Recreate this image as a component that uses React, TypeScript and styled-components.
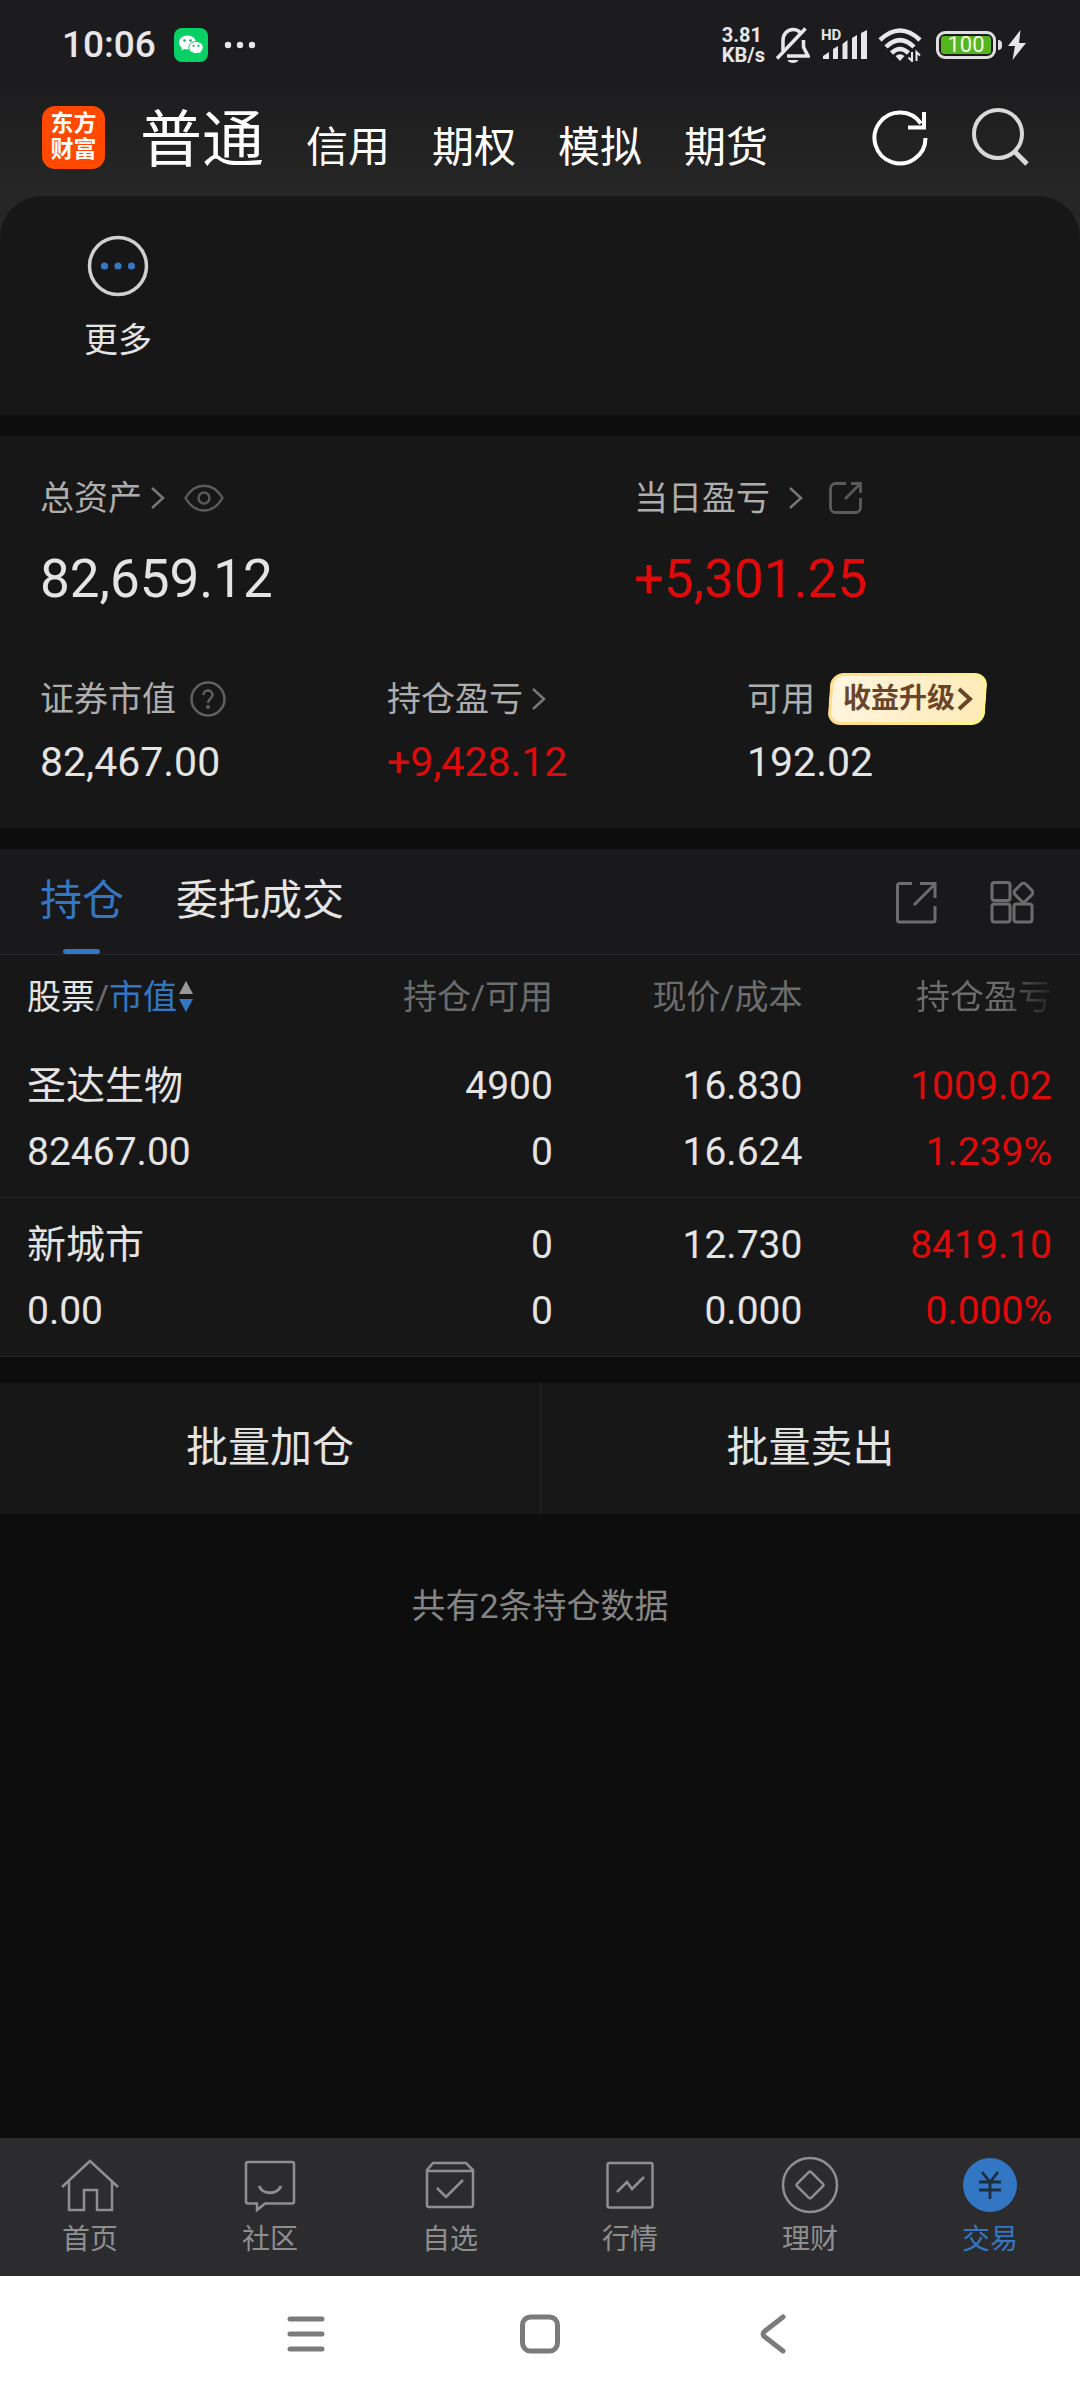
import React from "react";
import styled, { createGlobalStyle, css } from "styled-components";

const color = {
  page: "#0d0d0d",
  panel: "#171717",
  bar: "#19191b",
  line: "#262627",
  text: "#e4e4e4",
  label: "#adadad",
  muted: "#6c6c6c",
  blue: "#3377c4",
  red: "#e10a0a",
};

const GlobalStyle = createGlobalStyle`
  *, *::before, *::after { box-sizing: border-box; }
  body {
    margin: 0;
    background: ${color.page};
    color: ${color.text};
    font-family: Roboto, "Noto Sans CJK SC", sans-serif;
    line-height: 1.2;
  }
  button {
    margin: 0;
    padding: 0;
    border: 0;
    background: none;
    color: inherit;
    font: inherit;
    cursor: pointer;
  }
  a { color: inherit; text-decoration: none; }
  p, dl, dd { margin: 0; }
  svg { display: block; flex: none; }
`;

const Screen = styled.div`
  display: flex;
  flex-direction: column;
  min-height: 100vh;
`;

/* ---------- top area ---------- */

const Top = styled.header`
  background: linear-gradient(#1c1c1e 0, #1c1c1e 80px, #262626 190px);
`;

const StatusBar = styled.div`
  display: flex;
  align-items: center;
  height: 90px;
  padding: 0 54px 0 62px;
  color: #e8e6e8;
`;

const Clock = styled.time`
  margin-right: 18px;
  font-size: 37px;
  font-weight: 500;
  line-height: 40px;
`;

const StatusIcons = styled.div`
  display: flex;
  align-items: center;
  gap: 11px;
  margin-left: auto;
`;

const Speed = styled.span`
  display: flex;
  flex-direction: column;
  font-size: 20px;
  font-weight: 700;
  line-height: 20px;
`;

const SignalBox = styled.span`
  position: relative;
`;

const HdTag = styled.span`
  position: absolute;
  top: -2px;
  left: 0;
  font-size: 15px;
  font-weight: 700;
  line-height: 14px;
`;

const Power = styled.span`
  display: flex;
  align-items: center;
  gap: 6px;
  margin-left: 3px;
`;

const BatteryBox = styled.span`
  display: flex;
  align-items: center;
  gap: 2px;

  &::after {
    content: "";
    width: 4px;
    height: 10px;
    border-radius: 0 4px 4px 0;
    background: #e0dfe0;
  }
`;

const BatteryShell = styled.span`
  width: 60px;
  height: 28px;
  padding: 2px;
  border: 3px solid #e0dfe0;
  border-radius: 9px;
`;

const BatteryFill = styled.span`
  display: block;
  height: 18px;
  border-radius: 3px;
  background: #54b51c;
  color: #f4fbe9;
  font-size: 22px;
  line-height: 18px;
  text-align: center;
`;

const TitleBar = styled.div`
  display: flex;
  align-items: center;
  height: 106px;
  padding: 0 50px 12px 42px;
  color: #fff;
`;

const Logo = styled.a`
  display: flex;
  flex-direction: column;
  align-items: center;
  justify-content: center;
  width: 63px;
  height: 63px;
  margin-right: 35px;
  border-radius: 13px;
  background: #ff4800;
  font-size: 23px;
  font-weight: 700;
  line-height: 26px;
`;

const AccountTabs = styled.nav`
  display: flex;
  align-items: baseline;
  gap: 42px;
  padding-top: 14px;
`;

const AccountTab = styled.button<{ $current?: boolean }>`
  font-size: ${(p) => (p.$current ? 62 : 42)}px;
  line-height: 66px;
`;

const Tools = styled.div<{ $gap: number }>`
  display: flex;
  align-items: center;
  gap: ${(p) => p.$gap}px;
  margin-left: auto;
  color: ${color.muted};
`;

/* ---------- shortcuts ---------- */

const ShortcutBack = styled.div`
  background: #262626;
`;

const Shortcuts = styled.section`
  height: 219px;
  padding: 39px 84px 0;
  border-radius: 42px 42px 0 0;
  background: ${color.panel};
`;

const Shortcut = styled.button`
  display: flex;
  flex-direction: column;
  align-items: center;
  gap: 18px;
  font-size: 34px;
  line-height: 50px;
`;

/* ---------- assets ---------- */

const Assets = styled.section`
  display: grid;
  gap: 63px;
  margin: 21px 0;
  padding: 36px 0 41px 40px;
  background: ${color.panel};
`;

const Figures = styled.dl<{ $columns: string }>`
  display: grid;
  grid-template-columns: ${(p) => p.$columns};
`;

const Term = styled.dt<{ $gap?: number }>`
  display: flex;
  align-items: center;
  gap: ${(p) => p.$gap ?? 16}px;
  height: 52px;
  color: ${color.label};
  font-size: 34px;
`;

const TermLink = styled.a<{ $gap?: number }>`
  display: flex;
  align-items: center;
  gap: ${(p) => p.$gap ?? 8}px;
`;

const Amount = styled.dd<{ $large?: boolean; $gain?: boolean }>`
  color: ${(p) => (p.$gain ? color.red : color.text)};
  ${(p) =>
    p.$large
      ? css`
          margin-top: 24px;
          font-size: 53px;
          line-height: 62px;
        `
      : css`
          margin-top: 12px;
          font-size: 41px;
          line-height: 50px;
        `}
`;

const Upgrade = styled.button`
  position: relative;
  z-index: 0;
  display: flex;
  align-items: center;
  gap: 2px;
  height: 52px;
  padding: 0 13px 0 14px;
  color: #6b452a;
  font-size: 28px;
  font-weight: 700;

  &::before {
    content: "";
    position: absolute;
    inset: 0;
    z-index: -1;
    border: 3px solid transparent;
    border-radius: 13px;
    background:
      linear-gradient(100deg, #fff5e0, #ffebb8) padding-box,
      linear-gradient(100deg, #ffdb8c, #fff688) border-box;
    transform: skewX(-4deg);
  }
`;

/* ---------- holdings ---------- */

const Holdings = styled.section`
  background: ${color.panel};
`;

const TabBar = styled.div`
  display: flex;
  align-items: center;
  gap: 52px;
  height: 106px;
  padding: 0 46px 0 40px;
  border-bottom: 1px solid ${color.line};
  background: ${color.bar};
`;

const Tab = styled.button<{ $current?: boolean }>`
  position: relative;
  height: 105px;
  color: ${(p) => (p.$current ? color.blue : color.text)};
  font-size: 42px;

  ${(p) =>
    p.$current &&
    css`
      &::after {
        content: "";
        position: absolute;
        bottom: 0;
        left: 50%;
        width: 37px;
        height: 5px;
        margin-left: -19px;
        border-radius: 3px;
        background: ${color.blue};
      }
    `}
`;

const Table = styled.table`
  width: 100%;
  border-collapse: separate;
  border-spacing: 0;
  table-layout: fixed;
`;

const Head = styled.th<{ $width: string }>`
  width: ${(p) => p.$width};
  height: 84px;
  padding: 0;
  color: ${color.muted};
  font-size: 34px;
  font-weight: 400;
  text-align: right;
  white-space: nowrap;

  &:first-child {
    padding-left: 27px;
    text-align: left;
  }
  &:last-child { padding-right: 28px; }
`;

const SortHead = styled.div`
  display: flex;
  align-items: center;
`;

const StockTitle = styled.span`
  color: ${color.text};
`;

const SortButton = styled.button`
  display: flex;
  align-items: center;
  color: ${color.blue};
`;

const Fading = styled.span`
  mask-image: linear-gradient(to right, #000 62%, transparent 106%);
`;

const Cell = styled.td<{ $gain?: boolean }>`
  padding: 14px 0 12px;
  border-bottom: 1px solid ${color.line};
  color: ${(p) => (p.$gain ? color.red : color.text)};
  font-size: 39px;
  line-height: 66px;
  text-align: right;

  &:first-child {
    padding-left: 27px;
    text-align: left;
  }
  &:last-child { padding-right: 28px; }
`;

const Batch = styled.section`
  display: grid;
  grid-template-columns: 1fr 1fr;
  margin-top: 26px;
  background: ${color.panel};
`;

const BatchButton = styled.button`
  height: 131px;
  font-size: 42px;

  & + & { border-left: 1px solid ${color.line}; }
`;

const Count = styled.p`
  flex: 1;
  padding-top: 68px;
  color: #858585;
  font-size: 34px;
  line-height: 48px;
  text-align: center;
`;

/* ---------- bottom bars ---------- */

const MainNav = styled.nav`
  display: grid;
  grid-template-columns: repeat(6, 1fr);
  height: 138px;
  padding-top: 17px;
  background: #2c2c2e;
`;

const NavLink = styled.a<{ $current?: boolean }>`
  display: flex;
  flex-direction: column;
  align-items: center;
  gap: 8px;
  color: ${(p) => (p.$current ? color.blue : "#8f8f91")};
  font-size: 28px;
  line-height: 34px;
`;

const SystemNav = styled.nav`
  display: flex;
  justify-content: center;
  align-items: center;
  gap: 174px;
  height: 124px;
  padding-bottom: 8px;
  background: #fff;
  color: #7b7b7b;
`;

/* ---------- drawings ---------- */

type IconProps = {
  w: number;
  h?: number;
  stroke?: number;
  tint?: string;
  children: React.ReactNode;
};

const Icon = ({ w, h = w, stroke = 3, tint = "currentColor", children }: IconProps) => (
  <svg
    width={w}
    height={h}
    viewBox={`0 0 ${w} ${h}`}
    fill="none"
    stroke={tint}
    strokeWidth={stroke}
    aria-hidden="true"
  >
    {children}
  </svg>
);

const WeChat = () => (
  <Icon w={82} h={34} stroke={0}>
    <rect width="34" height="34" rx="8" fill="#07d065" />
    <path
      d="M13.500 7.500c-5 0-8.500 3.200-8.500 7 0 2.200 1.100 4.100 3 5.400l-.8 2.500 3-1.500c1 .3 2.100.5 3.300.5 5 0 8.500-3.200 8.500-6.900s-3.500-7-8.500-7z"
      fill="#fff"
    />
    <path
      d="M22 13.500c-4.200 0-7.200 2.600-7.200 6s3 6 7.200 6c1 0 1.900-.2 2.700-.4l2.600 1.300-.7-2.300c1.700-1.100 2.600-2.700 2.600-4.600 0-3.400-3-6-7.200-6z"
      fill="#fff"
      stroke="#07d065"
      strokeWidth="1"
    />
    <circle cx="10.500" cy="12.500" r="1.300" fill="#07b65a" />
    <circle cx="16.500" cy="12.500" r="1.300" fill="#07b65a" />
    <circle cx="19.500" cy="17.800" r="1.100" fill="#07b65a" />
    <circle cx="24.500" cy="17.800" r="1.100" fill="#07b65a" />
    <g fill="#e8e6e8">
      <circle cx="54" cy="17" r="3.200" />
      <circle cx="66" cy="17" r="3.200" />
      <circle cx="78" cy="17" r="3.200" />
    </g>
  </Icon>
);

const Muted = () => (
  <Icon w={34} h={36} stroke={3.5}>
    <path d="M7 24V13.500C7 7 11.500 2.500 17 2.500c3 0 5.500 1 7.200 3M27.500 13v7l4.500 9H11" />
    <path d="M1 31.500 29.500 1.500" />
    <path d="M11.500 33h11c-1.500 4-9.500 4-11 0z" fill="currentColor" stroke="none" />
  </Icon>
);

const Signal = () => (
  <Icon w={46} h={30} stroke={0}>
    <path
      d="M2 29v-3l6-4v7zM12 29V19l5-3v13zM21.500 29V14l5-4v19zM31 29V8l5-3v24zM40 29V3l6-3v29z"
      fill="currentColor"
    />
  </Icon>
);

const Wifi = () => (
  <Icon w={44} h={34} stroke={4.5}>
    <path d="M2 12Q22-7 42 12M8 19Q22 5 36 19M13.500 25Q22 17 30.500 25" />
    <path d="M22 33l-4.500-5q4.500-3.500 9 0z" fill="currentColor" stroke="none" />
    <path d="M34 24v9l-3.500-3.500M38.500 33v-9l3.500 3.500" strokeWidth="2" />
  </Icon>
);

const Bolt = () => (
  <Icon w={18} h={30} stroke={0}>
    <path d="M12.500 0 0 16h7L4.500 30 18 13h-7z" fill="currentColor" />
  </Icon>
);

const Refresh = () => (
  <Icon w={60} stroke={4} tint="#fff">
    <path d="M51 16.500A25.500 25.500 0 1 0 55.500 31" />
    <path d="M54 5v15.500H38" />
  </Icon>
);

const Search = () => (
  <Icon w={60} stroke={4} tint="#d9d9d9">
    <circle cx="28" cy="27" r="24" />
    <path d="m45 45 12 12" strokeWidth="5" />
  </Icon>
);

const More = () => (
  <Icon w={62} stroke={3.5} tint="#d0d0d0">
    <circle cx="31" cy="31" r="28.500" />
    <g fill={color.blue} stroke="none">
      <circle cx="17.500" cy="31" r="3.600" />
      <circle cx="31" cy="31" r="3.600" />
      <circle cx="44.500" cy="31" r="3.600" />
    </g>
  </Icon>
);

const Chevron = ({ bold }: { bold?: boolean }) => (
  <Icon w={16} h={24} stroke={bold ? 4 : 2.5} tint={bold ? "#6b452a" : "#777"}>
    <path d="M2 2l11 10L2 22" />
  </Icon>
);

const Eye = () => (
  <Icon w={40} h={28} stroke={2.5} tint="#5a5a5a">
    <path d="M1.500 14C11-2.500 29-2.500 38.500 14 29 30.500 11 30.500 1.500 14z" />
    <circle cx="20" cy="14" r="5.500" />
  </Icon>
);

const Help = () => (
  <Icon w={36} stroke={2.5} tint="#606060">
    <circle cx="18" cy="18" r="16.500" />
    <path d="M13.500 14c0-6 9-6 9 0 0 3.500-4.500 4-4.500 8" />
    <circle cx="18" cy="26" r="2" fill="#606060" stroke="none" />
  </Icon>
);

const ShareSmall = () => (
  <Icon w={34} stroke={2.8} tint="#5a5a5a">
    <path d="M18 2.500H7.500a5 5 0 0 0-5 5v19a5 5 0 0 0 5 5h20a5 5 0 0 0 5-5V17" />
    <path d="M17 18 32 3M23 2.500h9.500V12" />
  </Icon>
);

const Share = () => (
  <Icon w={44} stroke={3}>
    <path d="M18 3.500H5.500a2 2 0 0 0-2 2V40a2 2 0 0 0 2 2H39a2 2 0 0 0 2-2V26" />
    <path d="M20 25 40.500 4.500M26 3.500h15V18" />
  </Icon>
);

const Apps = () => (
  <Icon w={44} stroke={3}>
    <rect x="2" y="2.500" width="18" height="18" rx="2.500" />
    <rect x="2" y="24" width="18" height="18" rx="2.500" />
    <rect x="24" y="24" width="18" height="18" rx="2.500" />
    <rect x="26" y="5" width="15" height="15" rx="3" transform="rotate(45 33.500 12.500)" />
  </Icon>
);

const SortArrows = () => (
  <Icon w={18} h={34} stroke={0}>
    <path d="M2 14 9 1l7 13z" fill="#999" />
    <path d="M2 19h14L9 32z" fill={color.blue} />
  </Icon>
);

const RecentApps = () => (
  <Icon w={60} stroke={5}>
    <path d="M14 15h32M14 30h32M14 45h32" strokeLinecap="round" />
  </Icon>
);

const HomeKey = () => (
  <Icon w={60} stroke={5}>
    <rect x="12.500" y="13" width="35" height="34" rx="8" />
  </Icon>
);

const BackKey = () => (
  <Icon w={60} stroke={5}>
    <path d="M39 13 21 27q-4 3 0 6l18 14" strokeLinecap="round" />
  </Icon>
);

/* ---------- content ---------- */

const navItems = [
  {
    name: "首页",
    art: <path d="M2 32 30 6l28 26M9 26v29h15V35h13v20h15V26" />,
  },
  {
    name: "社区",
    art: (
      <>
        <path d="M8 7h44a2 2 0 0 1 2 2v37.500a2 2 0 0 1-2 2H25L17 55v-6.500H8a2 2 0 0 1-2-2V9a2 2 0 0 1 2-2z" />
        <path d="M19 31c4 9 18 9 22 0" strokeWidth="3" />
      </>
    ),
  },
  {
    name: "自选",
    art: <path d="M7 15l6-7h33l7 7v35a2 2 0 0 1-2 2H9a2 2 0 0 1-2-2zM7 16h46M17 33l9 9 17-17" />,
  },
  {
    name: "行情",
    art: (
      <>
        <rect x="7.500" y="8" width="45" height="44.500" rx="2" />
        <path d="m17 37 10-10 5 7 12-12" />
      </>
    ),
  },
  {
    name: "理财",
    art: (
      <>
        <circle cx="30" cy="30" r="27" />
        <rect x="20" y="20" width="20" height="20" rx="2" transform="rotate(45 30 30)" />
      </>
    ),
  },
  {
    name: "交易",
    current: true,
    art: (
      <>
        <circle cx="30" cy="30" r="27" fill={color.blue} stroke="none" />
        <path d="m22 17 8 10 8-10M30 27v17M19 27h22M19 35h22" stroke="#1f2c3c" strokeWidth="2.800" />
      </>
    ),
  },
];

const holdings = [
  {
    name: "圣达生物",
    value: "82467.00",
    held: "4900",
    free: "0",
    price: "16.830",
    cost: "16.624",
    gain: "1009.02",
    rate: "1.239%",
  },
  {
    name: "新城市",
    value: "0.00",
    held: "0",
    free: "0",
    price: "12.730",
    cost: "0.000",
    gain: "8419.10",
    rate: "0.000%",
  },
];

export default function App() {
  return (
    <Screen>
      <GlobalStyle />
      <Top>
        <StatusBar>
          <Clock>10:06</Clock>
          <WeChat />
          <StatusIcons>
            <Speed>
              <span>3.81</span>
              <span>KB/s</span>
            </Speed>
            <Muted />
            <SignalBox>
              <HdTag>HD</HdTag>
              <Signal />
            </SignalBox>
            <Wifi />
            <Power>
              <BatteryBox>
                <BatteryShell>
                  <BatteryFill>100</BatteryFill>
                </BatteryShell>
              </BatteryBox>
              <Bolt />
            </Power>
          </StatusIcons>
        </StatusBar>
        <TitleBar>
          <Logo href="#home">
            <span>东方</span>
            <span>财富</span>
          </Logo>
          <AccountTabs>
            <AccountTab $current>普通</AccountTab>
            <AccountTab>信用</AccountTab>
            <AccountTab>期权</AccountTab>
            <AccountTab>模拟</AccountTab>
            <AccountTab>期货</AccountTab>
          </AccountTabs>
          <Tools $gap={40}>
            <button aria-label="刷新">
              <Refresh />
            </button>
            <button aria-label="搜索">
              <Search />
            </button>
          </Tools>
        </TitleBar>
      </Top>

      <ShortcutBack>
        <Shortcuts>
          <Shortcut>
            <More />
            更多
          </Shortcut>
        </Shortcuts>
      </ShortcutBack>

      <Assets>
        <Figures $columns="594fr 446fr">
          <div>
            <Term $gap={18}>
              <TermLink href="#assets">
                总资产
                <Chevron />
              </TermLink>
              <button aria-label="隐藏金额">
                <Eye />
              </button>
            </Term>
            <Amount $large>82,659.12</Amount>
          </div>
          <div>
            <Term $gap={24}>
              <TermLink href="#today" $gap={18}>
                当日盈亏
                <Chevron />
              </TermLink>
              <button aria-label="分享">
                <ShareSmall />
              </button>
            </Term>
            <Amount $large $gain>
              +5,301.25
            </Amount>
          </div>
        </Figures>
        <Figures $columns="347fr 360fr 333fr">
          <div>
            <Term $gap={14}>
              证券市值
              <button aria-label="说明">
                <Help />
              </button>
            </Term>
            <Amount>82,467.00</Amount>
          </div>
          <div>
            <Term>
              <TermLink href="#profit">
                持仓盈亏
                <Chevron />
              </TermLink>
            </Term>
            <Amount $gain>+9,428.12</Amount>
          </div>
          <div>
            <Term $gap={14}>
              可用
              <Upgrade>
                收益升级
                <Chevron bold />
              </Upgrade>
            </Term>
            <Amount>192.02</Amount>
          </div>
        </Figures>
      </Assets>

      <Holdings>
        <TabBar>
          <Tab $current>持仓</Tab>
          <Tab>委托成交</Tab>
          <Tools $gap={52}>
            <button aria-label="分享持仓">
              <Share />
            </button>
            <button aria-label="更多功能">
              <Apps />
            </button>
          </Tools>
        </TabBar>
        <Table>
          <thead>
            <tr>
              <Head $width="28%">
                <SortHead>
                  <StockTitle>股票</StockTitle>/
                  <SortButton>
                    市值
                    <SortArrows />
                  </SortButton>
                </SortHead>
              </Head>
              <Head $width="23.2%">持仓/可用</Head>
              <Head $width="23.1%">现价/成本</Head>
              <Head $width="25.7%">
                <Fading>持仓盈亏</Fading>
              </Head>
            </tr>
          </thead>
          <tbody>
            {holdings.map((h) => (
              <tr key={h.name}>
                <Cell>
                  <div>{h.name}</div>
                  <div>{h.value}</div>
                </Cell>
                <Cell>
                  <div>{h.held}</div>
                  <div>{h.free}</div>
                </Cell>
                <Cell>
                  <div>{h.price}</div>
                  <div>{h.cost}</div>
                </Cell>
                <Cell $gain>
                  <div>{h.gain}</div>
                  <div>{h.rate}</div>
                </Cell>
              </tr>
            ))}
          </tbody>
        </Table>
      </Holdings>

      <Batch>
        <BatchButton>批量加仓</BatchButton>
        <BatchButton>批量卖出</BatchButton>
      </Batch>
      <Count>共有2条持仓数据</Count>

      <MainNav>
        {navItems.map((item) => (
          <NavLink key={item.name} href={`#${item.name}`} $current={item.current}>
            <Icon w={60} stroke={2.5}>
              {item.art}
            </Icon>
            {item.name}
          </NavLink>
        ))}
      </MainNav>
      <SystemNav>
        <button aria-label="最近任务">
          <RecentApps />
        </button>
        <button aria-label="主屏幕">
          <HomeKey />
        </button>
        <button aria-label="返回">
          <BackKey />
        </button>
      </SystemNav>
    </Screen>
  );
}
